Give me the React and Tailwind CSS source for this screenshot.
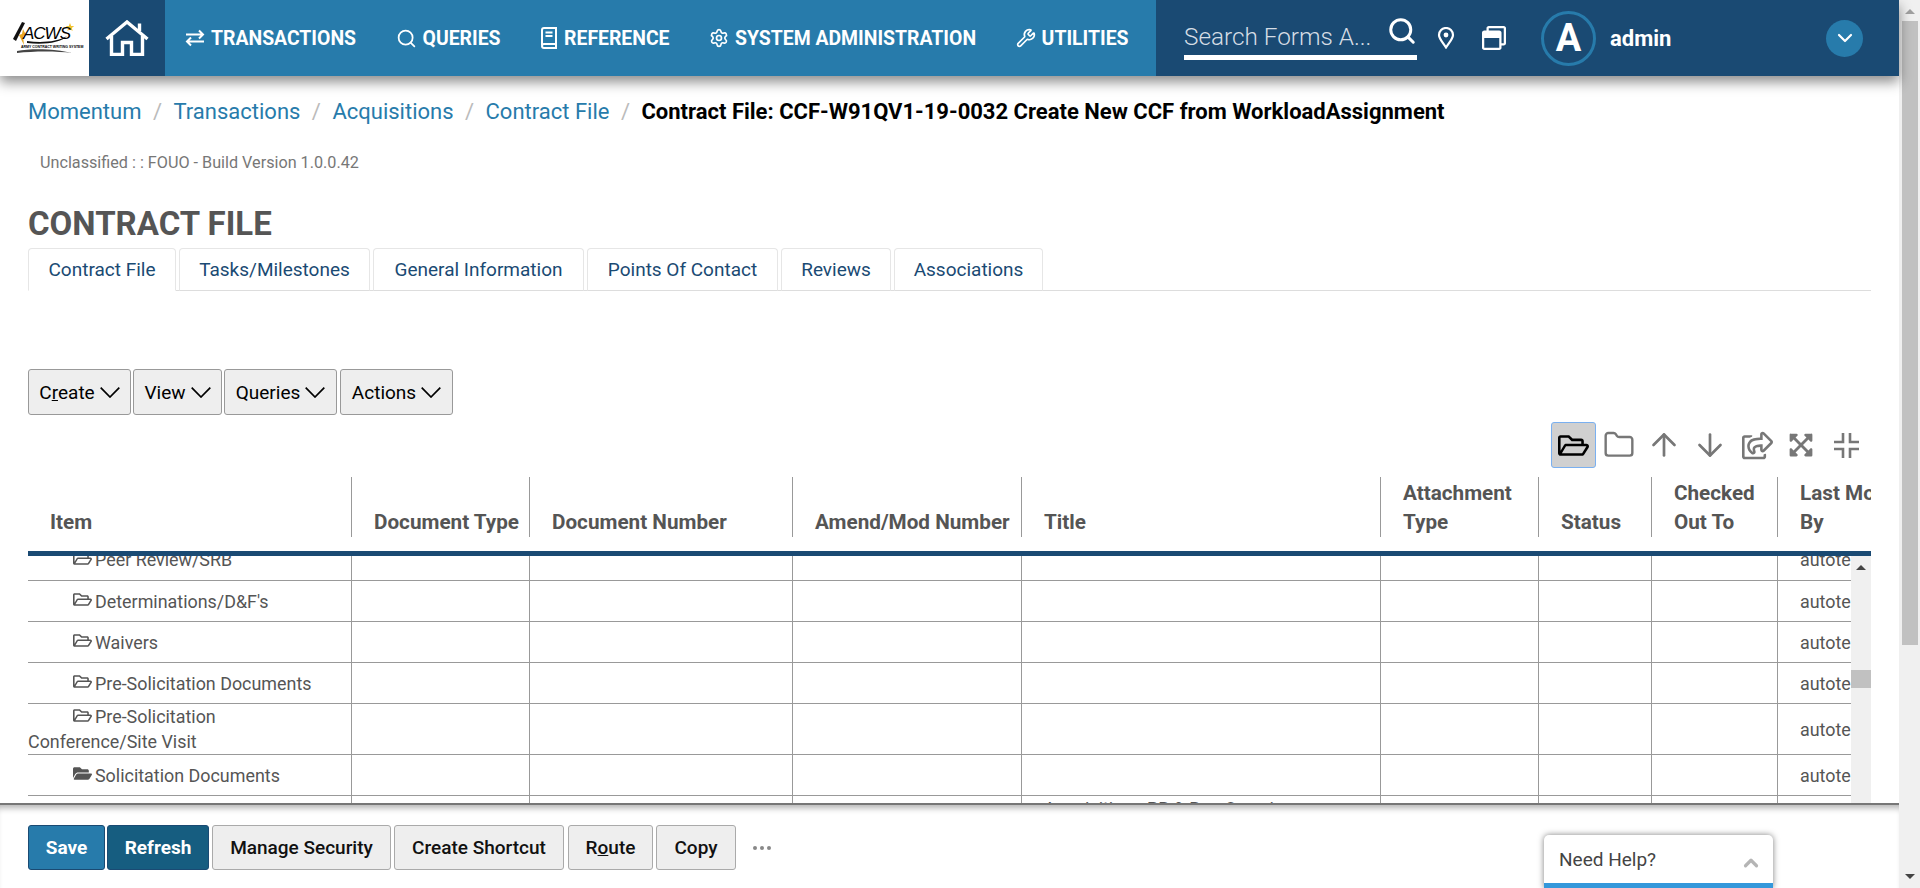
import React from "react";
import { ArrowUp, ArrowDown, Search, Settings, Wrench, ChevronDown, ChevronUp, Folder } from "lucide-react";
import { FaRegFolderOpen, FaFolderOpen, FaRegShareSquare, FaExpandArrowsAlt, FaRegWindowRestore } from "react-icons/fa";

const gridCols = "grid grid-cols-[323px_178px_263px_229px_359px_158px_113px_126px_94px]";

function ExchangeIcon() {
  return (
    <svg width="20" height="18" viewBox="0 0 20 18" fill="none" stroke="currentColor" strokeWidth="2">
      <path d="M1 5.5h17M14 1.5l4 4-4 4" />
      <path d="M19 12.5H2M6 8.5l-4 4 4 4" />
    </svg>
  );
}

function BookIcon() {
  return (
    <svg width="18" height="22" viewBox="0 0 18 22" fill="none" stroke="currentColor" strokeWidth="2">
      <path d="M2 18V3a2 2 0 0 1 2-2h12v16H4a2 2 0 0 0-2 2 2 2 0 0 0 2 2h12v-4" />
      <path d="M5.5 5.5h7M5.5 9h7" />
    </svg>
  );
}

function HomeIcon() {
  return (
    <svg width="44" height="36" viewBox="0 0 44 36" fill="none" stroke="currentColor" strokeWidth="3.4">
      <path d="M1.5 19 22 2l20.5 17" />
      <path d="M6.5 16v18.5h11V22.5h9v12h11V16" />
      <path d="M34.5 11V3.5" />
    </svg>
  );
}

function PinIcon() {
  return (
    <svg width="18" height="22" viewBox="0 0 18 22" fill="none" stroke="currentColor" strokeWidth="2.2">
      <path d="M9 20.5C5 14.5 2 11.5 2 8a7 7 0 0 1 14 0c0 3.5-3 6.5-7 12.5z" />
      <circle cx="9" cy="8" r="2.4" fill="currentColor" stroke="none" />
    </svg>
  );
}

function CompressIcon() {
  return (
    <svg width="25" height="25" viewBox="0 0 25 25" fill="none" stroke="currentColor" strokeWidth="2.6">
      <path d="M9 0v9H0M16 0v9h9M9 25v-9H0M16 25v-9h9" />
    </svg>
  );
}

function WideChevron() {
  return (
    <svg width="20" height="11" viewBox="0 0 20 11" fill="none" stroke="currentColor" strokeWidth="1.7">
      <path d="M.7.7 10 10 19.3.7" />
    </svg>
  );
}

function Logo() {
  return (
    <div className="relative h-[32px] w-[63px]">
      <svg className="absolute left-0 top-0" width="63" height="32" viewBox="0 0 63 32">
        <path d="M9 0l3 1-9 18-3-2z" fill="#111" />
        <path d="M10 7l3 6-3 1 1 9-5-10 3-1z" fill="#e8a820" />
        <path d="M57 1l1.200 3h3l-2.400 2 .9 3-2.700-1.800L54.300 9l.9-3-2.400-2h3z" fill="#f2c230" />
        <path d="M14 19c14 2 30 1 40-5-6 7-24 9-40 7z" fill="#111" />
        <path d="M4 29c15-3 40-2 55 2-15-2-38-2-55 0z" fill="#444" />
      </svg>
      <span className="absolute left-[10px] top-[3px] text-[17px] leading-[18px] font-['Liberation_Sans',sans-serif] italic text-black tracking-[-1px]">
        ACWS
      </span>
      <span className="absolute left-[8px] top-[23px] text-[3.5px] leading-[4px] font-['Liberation_Sans',sans-serif] font-bold text-black whitespace-nowrap">
        ARMY CONTRACT WRITING SYSTEM
      </span>
    </div>
  );
}

const navItems = [
  { label: "TRANSACTIONS", icon: <ExchangeIcon /> },
  { label: "QUERIES", icon: <Search size={21} strokeWidth={2} /> },
  { label: "REFERENCE", icon: <BookIcon /> },
  { label: "SYSTEM ADMINISTRATION", icon: <Settings size={20} strokeWidth={2} /> },
  { label: "UTILITIES", icon: <Wrench size={20} strokeWidth={2} /> },
];

function Header() {
  return (
    <header className="relative z-10 flex h-[76px] shrink-0 shadow-[0_6px_12px_rgba(0,0,0,0.45)]">
      <div className="flex w-[89px] items-center justify-center bg-white">
        <Logo />
      </div>
      <div className="flex w-[76px] items-center justify-center bg-[#1a4a73] text-white">
        <HomeIcon />
      </div>
      <nav className="flex w-[991px] items-center gap-[39.5px] bg-[#277bab] pl-[20px] pt-[1px] text-white">
        {navItems.map((item) => (
          <a key={item.label} className="flex items-center gap-[6px] text-[19.4px] font-bold whitespace-nowrap">
            {item.icon}
            {item.label}
          </a>
        ))}
      </nav>
      <div className="flex flex-1 items-center bg-[#1a4a73] pl-[28px] pr-[36px] text-white">
        <div className="flex h-[44px] w-[233px] items-start justify-between border-b-[5px] border-white">
          <span className="text-[24.3px] leading-[42px] font-light text-[#d5dde5]">Search Forms A...</span>
          <Search size={30} strokeWidth={2.4} />
        </div>
        <span className="ml-[20px]">
          <PinIcon />
        </span>
        <FaRegWindowRestore className="ml-[27px] text-[24px]" />
        <div className="ml-[35px] flex h-[55px] w-[55px] items-center justify-center rounded-full border-[3px] border-[#277bab] text-[38px] font-bold">
          A
        </div>
        <span className="ml-[14px] text-[22px] font-bold">admin</span>
        <div className="ml-auto flex h-[37px] w-[37px] items-center justify-center rounded-full bg-[#277bab]">
          <ChevronDown size={24} strokeWidth={2.2} />
        </div>
      </div>
    </header>
  );
}

function Breadcrumb() {
  const links = ["Momentum", "Transactions", "Acquisitions", "Contract File"];
  return (
    <div className="mt-[23px] flex h-[26px] items-center text-[22px] leading-[26px] whitespace-nowrap">
      {links.map((link) => (
        <React.Fragment key={link}>
          <a className="text-[#277bab]">{link}</a>
          <span className="w-[32px] text-center text-[#bbbbbb]">/</span>
        </React.Fragment>
      ))}
      <span className="font-bold text-black">Contract File: CCF-W91QV1-19-0032 Create New CCF from WorkloadAssignment</span>
    </div>
  );
}

const tabs = [
  { label: "Contract File", width: "w-[148px]" },
  { label: "Tasks/Milestones", width: "w-[191px]" },
  { label: "General Information", width: "w-[211px]" },
  { label: "Points Of Contact", width: "w-[191px]" },
  { label: "Reviews", width: "w-[110px]" },
  { label: "Associations", width: "w-[149px]" },
];

function Tabs() {
  return (
    <div className="mt-[6px] flex h-[43px] gap-[3px] border-b border-[#dddddd]">
      {tabs.map((tab, i) => (
        <a
          key={tab.label}
          className={`flex h-[43px] items-center justify-center rounded-t-[4px] border border-[#e6e6e6] pt-[2px] text-[19px] text-[#1a4a73] ${tab.width} ${
            i === 0 ? "border-b-white bg-white" : "border-b-[#dddddd]"
          }`}
        >
          {tab.label}
        </a>
      ))}
    </div>
  );
}

function MenuButton({ children, width }) {
  return (
    <button className={`flex h-[46px] items-center justify-center gap-[5px] rounded-[3px] border border-[#999999] bg-[#eeeeee] text-[19px] text-black ${width}`}>
      <span className="pt-[2px]">{children}</span>
      <WideChevron />
    </button>
  );
}

function Toolbar() {
  const box = "flex h-[46px] w-[45.5px] items-center justify-center text-[#777777]";
  return (
    <div className="mt-[7px] flex justify-end pr-[2px]">
      <div className="flex h-[46px] w-[45px] items-center justify-center rounded-[3px] border border-[#7ab0f0] bg-[#d0d0d0] text-black">
        <FaRegFolderOpen className="text-[31px]" />
      </div>
      <div className={box}>
        <Folder size={32} strokeWidth={1.8} />
      </div>
      <div className={box}>
        <ArrowUp size={36} strokeWidth={1.8} />
      </div>
      <div className={box}>
        <ArrowDown size={36} strokeWidth={1.8} />
      </div>
      <div className={box}>
        <FaRegShareSquare className="text-[31px] translate-x-[2px]" />
      </div>
      <div className={box}>
        <FaExpandArrowsAlt className="text-[26px]" />
      </div>
      <div className={box}>
        <CompressIcon />
      </div>
    </div>
  );
}

const headers = [
  ["Item"],
  ["Document Type"],
  ["Document Number"],
  ["Amend/Mod Number"],
  ["Title"],
  ["Attachment", "Type"],
  ["Status"],
  ["Checked", "Out To"],
];

function TableHeader() {
  return (
    <div className={`${gridCols} mt-[9px] h-[74px] overflow-hidden`}>
      {headers.map((lines, i) => (
        <div
          key={lines[0]}
          className={`flex h-[60px] flex-col justify-end text-[20.7px] leading-[29px] font-bold text-[#555555] ${
            i === 0 ? "pl-[22px]" : "border-l border-[#999999] pl-[22px]"
          }`}
        >
          {lines.map((line) => (
            <span key={line} className="whitespace-nowrap">{line}</span>
          ))}
        </div>
      ))}
      <div className="flex h-[60px] w-[94px] flex-col justify-end overflow-hidden border-l border-[#999999] pl-[22px] text-[20.7px] leading-[29px] font-bold text-[#555555]">
        <span className="whitespace-nowrap">Last Modified</span>
        <span>By</span>
      </div>
    </div>
  );
}

const rows = [
  { name: "Peer Review/SRB", height: "h-[42px]" },
  { name: "Determinations/D&F's", height: "h-[41px]" },
  { name: "Waivers", height: "h-[41px]" },
  { name: "Pre-Solicitation Documents", height: "h-[41px]" },
  { name: "Pre-Solicitation Conference/Site Visit", height: "h-[51px]" },
  { name: "Solicitation Documents", height: "h-[41px]", solid: true },
];

function Row({ row }) {
  const emptyCols = [0, 1, 2, 3, 4, 5, 6];
  return (
    <div className={`${gridCols} ${row.height} border-b border-[#999999] text-[17.9px] leading-[25px] text-[#555555]`}>
      <div className="flex items-center">
        <div className="w-[300px] indent-[45px]">
          {row.solid ? (
            <FaFolderOpen className="mr-[3px] inline-block -translate-y-[3px] text-[19px]" />
          ) : (
            <FaRegFolderOpen className="mr-[3px] inline-block -translate-y-[3px] text-[19px]" />
          )}
          {row.name}
        </div>
      </div>
      {emptyCols.map((c) => (
        <div key={c} className="border-l border-[#999999]" />
      ))}
      <div className="flex items-center overflow-hidden border-l border-[#999999] pl-[22px]">autote</div>
    </div>
  );
}

function TableBody() {
  return (
    <div className="flex min-h-0 flex-1 overflow-hidden border-t-[5px] border-[#1a4a73]">
      <div className="min-w-0 flex-1 overflow-hidden">
        <div className="-mt-[17px] w-[1843px]">
          {rows.map((row) => (
            <Row key={row.name} row={row} />
          ))}
          <div className={`${gridCols} h-[41px] text-[17.9px] leading-[25px] text-[#555555]`}>
            <div />
            <div className="border-l border-[#999999]" />
            <div className="border-l border-[#999999]" />
            <div className="border-l border-[#999999]" />
            <div className="border-l border-[#999999] pl-[22px] whitespace-nowrap">Acquisitions PR & Req Overview</div>
            <div className="border-l border-[#999999]" />
            <div className="border-l border-[#999999]" />
            <div className="border-l border-[#999999]" />
            <div className="border-l border-[#999999]" />
          </div>
        </div>
      </div>
      <div className="flex w-[20px] shrink-0 flex-col items-center bg-[#f0f0f0]">
        <div className="mt-[9px] h-0 w-0 border-x-[5px] border-b-[5px] border-x-transparent border-b-[#444444]" />
        <div className="mt-[100px] h-[18px] w-full bg-[#c1c1c1]" />
      </div>
    </div>
  );
}

function FootButton({ children, width, tone }) {
  const tones = {
    save: "border-[#1a4a73] bg-[#277bab] font-bold text-white",
    refresh: "border-[#1a4a73] bg-[#165d80] font-bold text-white",
    plain: "border-[#aaaaaa] bg-[#eeeeee] font-medium text-[#111111]",
  };
  return (
    <button className={`h-[45px] rounded-[3px] border pt-[2px] text-[19px] ${width} ${tones[tone]}`}>{children}</button>
  );
}

function Footer() {
  return (
    <footer className="relative flex h-[85px] shrink-0 border-t-2 border-[#777777] bg-white pl-[28px] pt-[20px] shadow-[inset_0_7px_6px_-4px_rgba(0,0,0,0.3)]">
      <div className="flex h-[45px] gap-[2px]">
        <FootButton width="w-[77px]" tone="save">Save</FootButton>
        <FootButton width="w-[102px]" tone="refresh">Refresh</FootButton>
        <FootButton width="w-[179px] ml-[1px]" tone="plain">Manage Security</FootButton>
        <FootButton width="w-[170px] ml-[1px]" tone="plain">Create Shortcut</FootButton>
        <FootButton width="w-[85px] ml-[2px]" tone="plain">
          R<u>o</u>ute
        </FootButton>
        <FootButton width="w-[80px] ml-[1px]" tone="plain">Copy</FootButton>
        <span className="ml-[15px] flex items-center gap-[3px]">
          <i className="h-[4px] w-[4px] rounded-full bg-[#888888]" />
          <i className="h-[4px] w-[4px] rounded-full bg-[#888888]" />
          <i className="h-[4px] w-[4px] rounded-full bg-[#888888]" />
        </span>
      </div>
      <div className="absolute right-[126px] top-[30px] flex h-[53px] w-[229px] items-start justify-between rounded-t-[5px] border-b-[5px] border-b-[#3498db] bg-white px-[15px] pt-[12px] shadow-[0_0_6px_rgba(0,0,0,0.5)]">
        <span className="text-[19px] leading-[26px] text-[#444444]">Need Help?</span>
        <ChevronUp size={22} strokeWidth={3.5} className="mr-[-4px] mt-[5px] text-[#b5b5b5]" />
      </div>
    </footer>
  );
}

function PageScrollbar() {
  return (
    <div className="flex w-[21px] shrink-0 flex-col items-center bg-[#f0f0f0]">
      <div className="mt-[9px] h-0 w-0 border-x-[5px] border-b-[5px] border-x-transparent border-b-[#a0a0a0]" />
      <div className="mt-[7px] h-[624px] w-[16px] bg-[#c1c1c1]" />
      <div className="mt-auto mb-[9px] h-0 w-0 border-x-[5px] border-t-[5px] border-x-transparent border-t-[#444444]" />
    </div>
  );
}

function App() {
  return (
    <div className="flex h-[888px] w-[1920px] overflow-hidden bg-white font-['Roboto',sans-serif]">
      <div className="flex w-[1899px] flex-col">
        <Header />
        <main className="flex min-h-0 flex-1 flex-col pl-[28px] pr-[28px]">
          <Breadcrumb />
          <div className="ml-[12px] mt-[28px] h-[20px] text-[16.2px] leading-[20px] text-[#777777]">
            Unclassified : : FOUO - Build Version 1.0.0.42
          </div>
          <h1 className="mt-[33px] h-[36px] text-[33px] leading-[36px] font-bold text-[#555555]">CONTRACT FILE</h1>
          <Tabs />
          <div className="mt-[78px] flex gap-[2px]">
            <MenuButton width="w-[103px]">
              C<u>r</u>eate
            </MenuButton>
            <MenuButton width="w-[89px]">View</MenuButton>
            <MenuButton width="w-[113px]">Queries</MenuButton>
            <MenuButton width="w-[113px] ml-[1px]">Actions</MenuButton>
          </div>
          <Toolbar />
          <TableHeader />
          <TableBody />
        </main>
        <Footer />
      </div>
      <PageScrollbar />
    </div>
  );
}

export default App;
